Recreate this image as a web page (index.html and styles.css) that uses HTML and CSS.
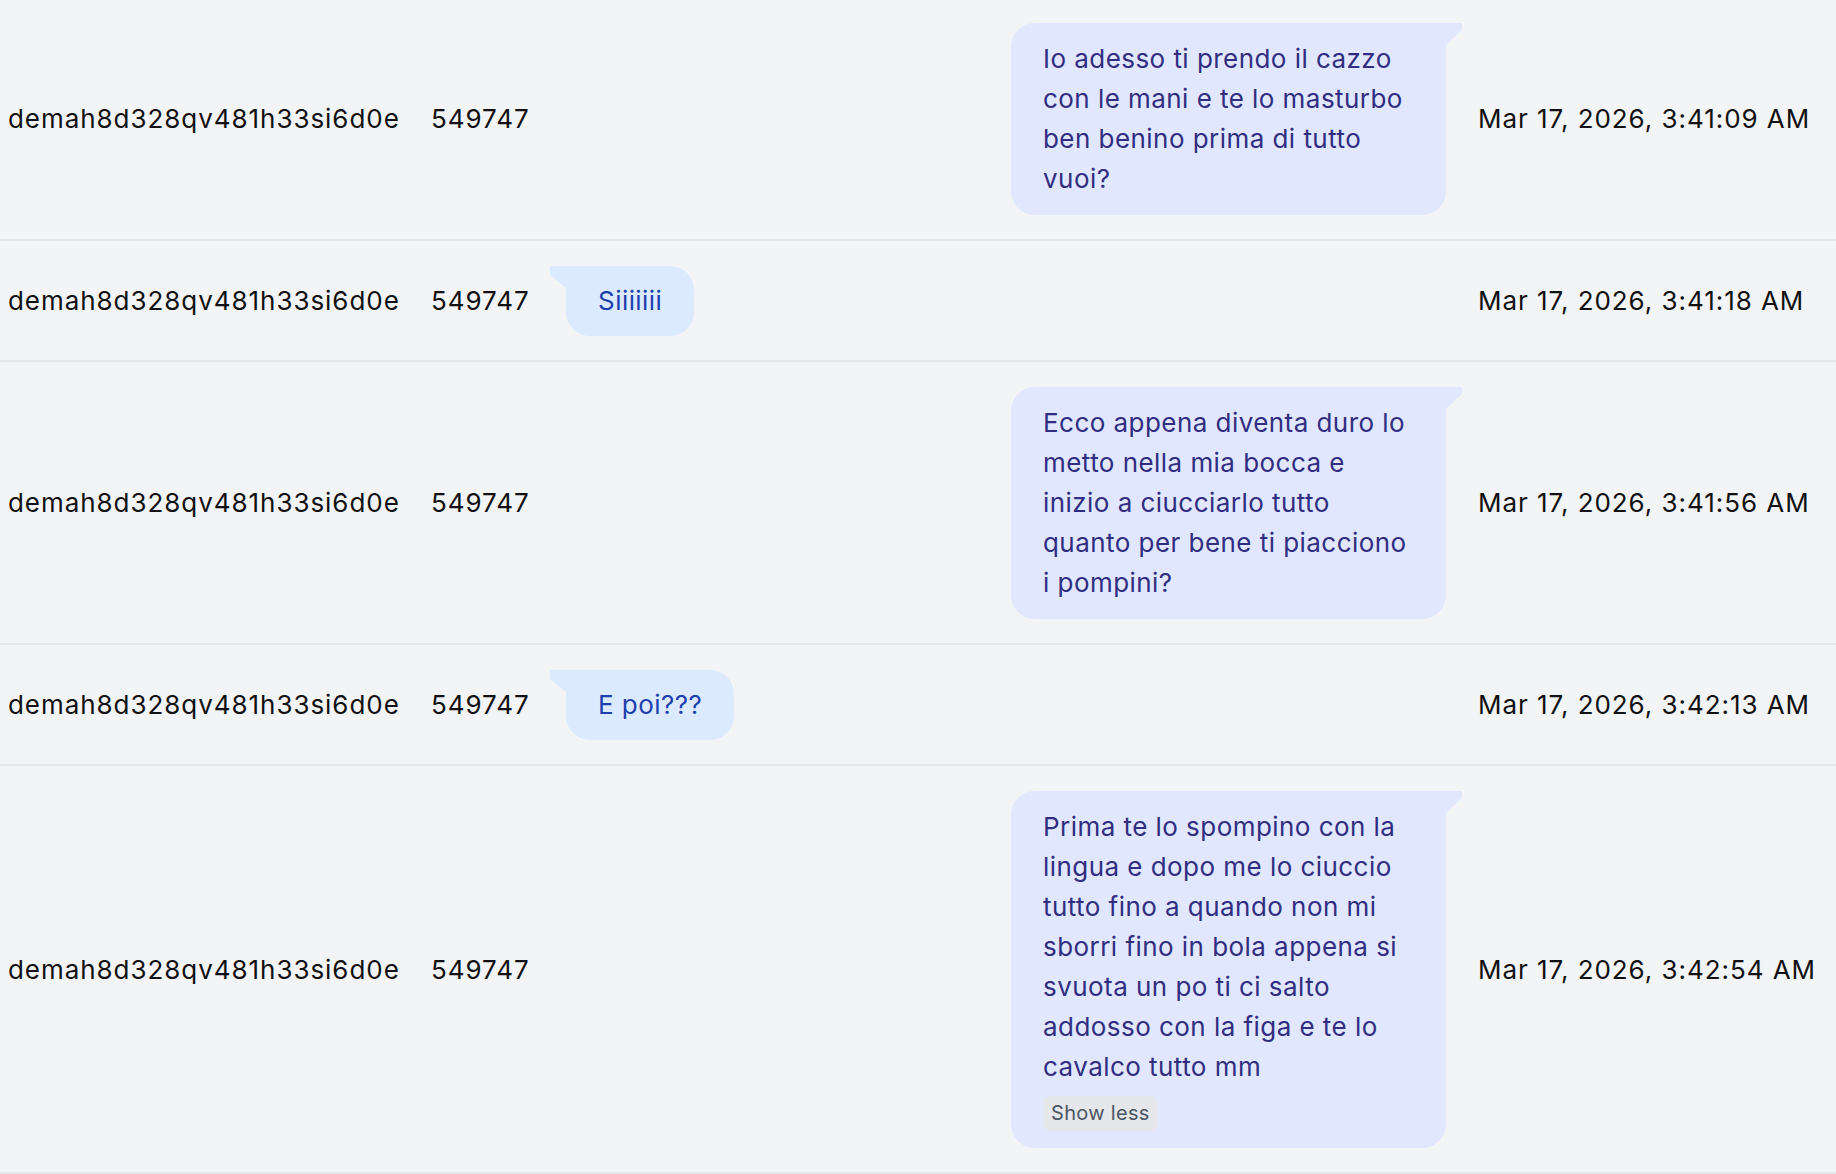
FILE: index.html
```html
<!DOCTYPE html>
<html lang="it">
<head>
<meta charset="utf-8">
<title>Messages</title>
<link rel="stylesheet" href="styles.css">
</head>
<body>
<div class="page">
<table class="log">
  <colgroup>
    <col class="c-id"><col class="c-num"><col class="c-msg"><col class="c-time">
  </colgroup>
  <tbody>
    <tr class="first">
      <td class="id">demah8d328qv481h33si6d0e</td>
      <td class="num">549747</td>
      <td class="msg out"><div class="bubble">Io adesso ti prendo il cazzo con le mani e te lo masturbo ben benino prima di tutto vuoi?</div></td>
      <td class="time">Mar 17, 2026, 3:41:09 AM</td>
    </tr>
    <tr>
      <td class="id">demah8d328qv481h33si6d0e</td>
      <td class="num">549747</td>
      <td class="msg in"><div class="bubble">Siiiiiii</div></td>
      <td class="time">Mar 17, 2026, 3:41:18 AM</td>
    </tr>
    <tr>
      <td class="id">demah8d328qv481h33si6d0e</td>
      <td class="num">549747</td>
      <td class="msg out"><div class="bubble">Ecco appena diventa duro lo metto nella mia bocca e inizio a ciucciarlo tutto quanto per bene ti piacciono i pompini?</div></td>
      <td class="time">Mar 17, 2026, 3:41:56 AM</td>
    </tr>
    <tr>
      <td class="id">demah8d328qv481h33si6d0e</td>
      <td class="num">549747</td>
      <td class="msg in"><div class="bubble">E poi???</div></td>
      <td class="time">Mar 17, 2026, 3:42:13 AM</td>
    </tr>
    <tr>
      <td class="id">demah8d328qv481h33si6d0e</td>
      <td class="num">549747</td>
      <td class="msg out"><div class="bubble">Prima te lo spompino con la lingua e dopo me lo ciuccio tutto fino a quando non mi sborri fino in bola appena si svuota un po ti ci salto addosso con la figa e te lo cavalco tutto mm<button class="toggle" type="button">Show less</button></div></td>
      <td class="time">Mar 17, 2026, 3:42:54 AM</td>
    </tr>
  </tbody>
</table>
</div>
</body>
</html>
```

FILE: styles.css
```css
html, body {
  margin: 0;
  padding: 0;
  background: #f3f4f6;
}

body {
  font-family: Inter, "Noto Sans", "Liberation Sans", sans-serif;
  color: #111111;
  font-size: 26px;
  letter-spacing: 0.95px;
  line-height: 40px;
}

.page {
  margin-top: -2px;
}

.log {
  width: 100%;
  border-collapse: collapse;
  table-layout: fixed;
}

.c-id { width: 415px; }
.c-num { width: 131px; }
.c-msg { width: 916px; }

.log td {
  padding: 25px 16px 24px;
  vertical-align: middle;
  white-space: nowrap;
}

.log tr {
  border-bottom: 2px solid #e5e7eb;
}

.log td.id {
  padding-left: 8px;
}

.log td.msg {
  white-space: normal;
  padding-left: 20px;
}

.msg.out {
  text-align: right;
}

.bubble {
  position: relative;
  display: inline-block;
  text-align: left;
  max-width: 435px;
  box-sizing: border-box;
  padding: 16px 32px;
  border-radius: 24px;
  font-size: 26px;
  letter-spacing: 0.45px;
  line-height: 40px;
}

.out .bubble {
  background: #e0e7ff;
  color: #312e81;
  border-top-right-radius: 0;
}

.in .bubble {
  background: #dbeafe;
  color: #1e40af;
  border-top-left-radius: 0;
  padding: 15px 32px;
}

.bubble::before {
  content: "";
  position: absolute;
  top: 0;
  width: 16px;
  height: 22px;
}

.out .bubble::before {
  right: -16px;
  background: #e0e7ff;
  clip-path: polygon(0 0, 100% 0, 100% 32%, 0 100%);
}

.in .bubble::before {
  left: -16px;
  background: #dbeafe;
  clip-path: polygon(0 0, 100% 0, 100% 100%, 0 40%);
}

.toggle {
  display: block;
  margin: 9px 0 1px;
  padding: 0 8px;
  height: 35px;
  border: 0;
  border-radius: 7px;
  background: #e5e7eb;
  color: #4b5563;
  font-family: Inter, "Noto Sans", "Liberation Sans", sans-serif;
  font-size: 20px;
  letter-spacing: 0.3px;
  line-height: 35px;
  cursor: pointer;
}
```
